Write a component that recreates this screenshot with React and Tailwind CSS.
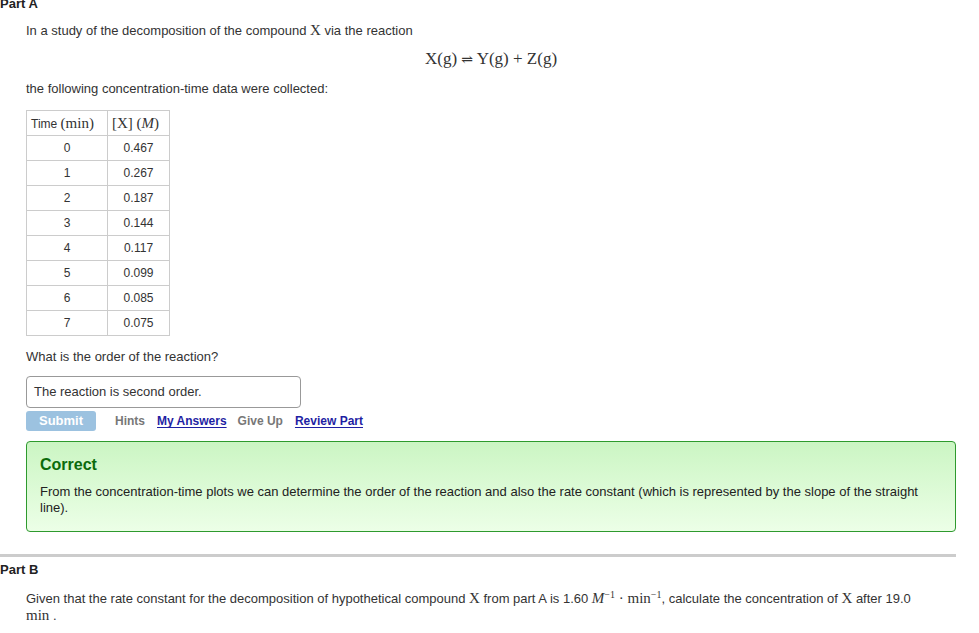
import React from 'react';

const rows = [
  ['0', '0.467'],
  ['1', '0.267'],
  ['2', '0.187'],
  ['3', '0.144'],
  ['4', '0.117'],
  ['5', '0.099'],
  ['6', '0.085'],
  ['7', '0.075'],
];

// serif math text, close to KaTeX main
const M = ({ children, italic = false, className = '' }) => (
  <span
    className={`text-[15px] ${italic ? 'italic' : ''} ${className}`}
    style={{ fontFamily: '"Liberation Serif", "DejaVu Serif", serif' }}
  >
    {children}
  </span>
);

export default function App() {
  return (
    <div
      className="w-[979px] h-[633px] overflow-hidden bg-white text-[13px] text-[#333]"
      style={{ fontFamily: '"Liberation Sans", Arial, sans-serif' }}
    >
      <div className="mt-[-4px] font-bold text-[13px] leading-[16px] text-[#222]">Part A</div>

      <div className="pl-[26px] pr-[23px]">
        <p className="mt-[10px] leading-[16px]">
          In a study of the decomposition of the compound <M>X</M> via the reaction
        </p>

        <div className="mt-[11px] text-center leading-[18px]">
          <M className="text-[17px]">
            X(g) <span className="text-[14px]">⇌</span> Y(g) + Z(g)
          </M>
        </div>

        <p className="mt-[12px] leading-[16px]">the following concentration-time data were collected:</p>

        <table className="mt-[13px] border-collapse border border-[#333] text-[12px]">
          <thead>
            <tr className="h-[25px]">
              <th className="w-[81px] border border-[#ccc] px-[4px] font-normal text-left whitespace-nowrap">
                Time <M>(min)</M>
              </th>
              <th className="w-[62px] border border-[#ccc] px-[4px] font-normal text-left whitespace-nowrap">
                <M>[X] (<i>M</i>)</M>
              </th>
            </tr>
          </thead>
          <tbody>
            {rows.map(([t, c]) => (
              <tr key={t} className="h-[25px]">
                <td className="border border-[#ccc] text-center">{t}</td>
                <td className="border border-[#ccc] text-center">{c}</td>
              </tr>
            ))}
          </tbody>
        </table>

        <p className="mt-[13px] leading-[16px]">What is the order of the reaction?</p>

        <div className="mt-[11px] w-[275px] h-[32px] border border-[#999] rounded-[4px] flex items-center px-[7px]">
          The reaction is second order.
        </div>

        <div className="mt-[3px] flex items-center text-[12px] font-bold">
          <div className="w-[70px] h-[20px] rounded-[3px] bg-[#9cc2e0] text-white text-[13px] flex items-center justify-center">
            Submit
          </div>
          <span className="ml-[19px] text-[#777]">Hints</span>
          <span className="ml-[12px] text-[#1f1fa3] underline underline-offset-2">My Answers</span>
          <span className="ml-[11px] text-[#777]">Give Up</span>
          <span className="ml-[12px] text-[#1f1fa3] underline underline-offset-2">Review Part</span>
        </div>

        <div className="mt-[10px] h-[91px] border border-[#2e9a2e] rounded-[4px] bg-gradient-to-b from-[#cbf5c3] to-[#ecffe7] px-[13px] pt-[13px]">
          <div className="text-[16px] font-bold text-[#0b6b0b] leading-[20px]">Correct</div>
          <p className="mt-[9px] text-[13px] leading-[16px] text-[#222]">
            From the concentration-time plots we can determine the order of the reaction and also the rate constant (which is represented by the slope of the straight line).
          </p>
        </div>
      </div>

      <div className="mt-[22px] w-[956px] h-[3px] bg-[#cccccc]"></div>

      <div className="mt-[5px] font-bold text-[13px] leading-[16px] text-[#222]">Part B</div>

      <div className="pl-[26px] pr-[40px]">
        <p className="mt-[12px] text-[13px] leading-[16px]">
          Given that the rate constant for the decomposition of hypothetical compound <M>X</M> from part A is 1.60{' '}
          <M italic>M</M>
          <sup className="text-[10px]" style={{ fontFamily: '"Liberation Serif", serif' }}>−1</sup>
          <M> · min</M>
          <sup className="text-[10px]" style={{ fontFamily: '"Liberation Serif", serif' }}>−1</sup>, calculate the concentration of <M>X</M> after 19.0{' '}
          <span className="whitespace-nowrap"><M>min</M> .</span>
        </p>
      </div>
    </div>
  );
}
